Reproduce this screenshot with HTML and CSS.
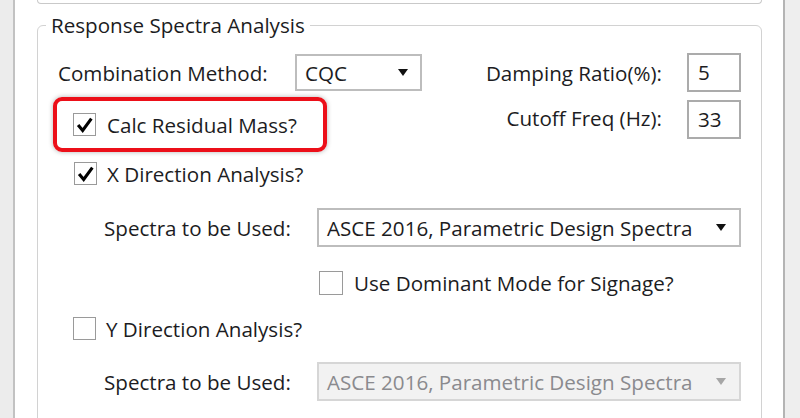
FILE: index.html
```html
<!DOCTYPE html>
<html>
<head>
<meta charset="utf-8">
<link rel="stylesheet" href="styles.css">
</head>
<body>
<div class="window">
  <div class="edge-left"></div>
  <div class="main">
    <div class="prev-group"></div>
    <div class="group">
      <div class="legend">Response Spectra Analysis</div>

      <div class="row row1">
        <span class="label label-combo">Combination Method:</span>
        <div class="select select-small"><span class="sel-text">CQC</span><span class="arrow"></span></div>
        <span class="fill"></span>
        <span class="label">Damping Ratio(%):</span>
        <div class="input">5</div>
      </div>

      <div class="row row2">
        <div class="highlight">
          <span class="check checked"><svg viewBox="0 0 23 23" width="22" height="22"><path d="M4.5 11.5 L9.5 17.5 L19 4.5" fill="none" stroke="#000" stroke-width="3.4" stroke-linejoin="miter" stroke-linecap="butt"/></svg></span>
          <span class="label">Calc Residual Mass?</span>
        </div>
        <span class="fill"></span>
        <div class="cutoff">
          <span class="label">Cutoff Freq (Hz):</span>
          <div class="input">33</div>
        </div>
      </div>

      <div class="row row3">
        <span class="check checked"><svg viewBox="0 0 23 23" width="22" height="22"><path d="M4.5 11.5 L9.5 17.5 L19 4.5" fill="none" stroke="#000" stroke-width="3.4" stroke-linejoin="miter" stroke-linecap="butt"/></svg></span>
        <span class="label">X Direction Analysis?</span>
      </div>

      <div class="row row4">
        <span class="label label-spectra">Spectra to be Used:</span>
        <div class="select select-wide"><span class="sel-text">ASCE 2016, Parametric Design Spectra</span><span class="arrow"></span></div>
      </div>

      <div class="row row5">
        <span class="check"></span>
        <span class="label">Use Dominant Mode for Signage?</span>
      </div>

      <div class="row row6">
        <span class="check"></span>
        <span class="label">Y Direction Analysis?</span>
      </div>

      <div class="row row7">
        <span class="label label-spectra">Spectra to be Used:</span>
        <div class="select select-wide disabled"><span class="sel-text">ASCE 2016, Parametric Design Spectra</span><span class="arrow"></span></div>
      </div>
    </div>
  </div>
  <div class="edge-right"></div>
</div>
</body>
</html>
```
FILE: styles.css
```css
* { box-sizing: border-box; }
html, body { margin: 0; padding: 0; background: #fff; }
body {
  font-family: "Segoe UI", "Open Sans", "Noto Sans", sans-serif;
  font-size: 20.6px;
  color: #1c1c22;
}
.window {
  display: flex;
  width: 800px;
  height: 418px;
  overflow: hidden;
}
.edge-left {
  width: 15px;
  background: #ececec;
  border-right: 2px solid #c2c2c2;
}
.edge-right {
  flex: 1;
  background: #eeeeee;
  border-left: 2px solid #b4b4b4;
}
.main {
  width: 768px;
  background: #fff;
  padding: 0 21px 0 22px;
  display: flex;
  flex-direction: column;
}
.prev-group {
  flex: none;
  height: 4px;
  border: 1.5px solid #c9c9c9;
  border-top: none;
  border-radius: 0 0 5px 5px;
}
.group {
  flex: none;
  margin-top: 21px;
  height: 430px;
  border: 1.5px solid #d2d2d2;
  border-radius: 6px;
  display: flex;
  flex-direction: column;
  padding: 0 20px 0 0;
}
.legend {
  align-self: flex-start;
  margin: -13px 0 0 8px;
  padding: 0 5px;
  height: 24px;
  line-height: 24px;
  background: #fff;
}
.row {
  display: flex;
  align-items: center;
  flex: none;
}
.fill { flex: 1; }
.label { white-space: nowrap; line-height: 24px; }

.row1 { margin-top: 16px; height: 39px; }
.label-combo { margin-left: 20px; width: 237px; }
.select {
  display: flex;
  align-items: center;
  border: 2px solid #bdbdbd;
  background: #fff;
  padding: 0 12px 0 8px;
}
.select-small { width: 127px; height: 37px; }
.sel-text { flex: 1; white-space: nowrap; }
.arrow {
  width: 0;
  height: 0;
  border-left: 5.5px solid transparent;
  border-right: 5.5px solid transparent;
  border-top: 7px solid #111;
}
.input {
  width: 54px;
  height: 39px;
  border: 2px solid #ababab;
  margin-left: 25px;
  padding-left: 9px;
  line-height: 35px;
}

.row2 { margin-top: 5px; height: 55px; align-items: flex-start; }
.highlight {
  margin-left: 15px;
  width: 274px;
  height: 55px;
  border: 4px solid #ec0f19;
  border-radius: 9px;
  box-shadow: 0 0 5px rgba(0,0,0,0.3);
  display: flex;
  align-items: center;
  padding-left: 16px;
}
.cutoff {
  display: flex;
  align-items: center;
  margin-top: 3px;
  height: 39px;
}
.cutoff .label { margin-top: -3px; }

.check {
  width: 23px;
  height: 23px;
  border: 1.5px solid #9a9a9a;
  background: #fff;
  display: flex;
  align-items: center;
  justify-content: center;
  margin-right: 11px;
  flex: none;
}
.check svg { display: block; }

.row3 { margin-top: 10px; height: 23px; }
.row3 .check { margin-left: 36px; margin-right: 10px; }

.row4 { margin-top: 23px; height: 39px; }
.label-spectra { margin-left: 66px; width: 213px; }
.select-wide { width: 424px; height: 39px; padding-right: 13px; }

.row5 { margin-top: 24px; height: 24px; }
.row5 .check { margin-left: 281px; width: 24px; height: 24px; }

.row6 { margin-top: 22px; height: 23px; }
.row6 .check { margin-left: 35px; margin-right: 10px; }

.row7 { margin-top: 22px; height: 39px; }
.select.disabled {
  background: #f2f2f2;
  border-color: #d6d6d6;
  color: #8a8a8e;
}
.select.disabled .arrow { border-top-color: #a6a6a6; }
```
